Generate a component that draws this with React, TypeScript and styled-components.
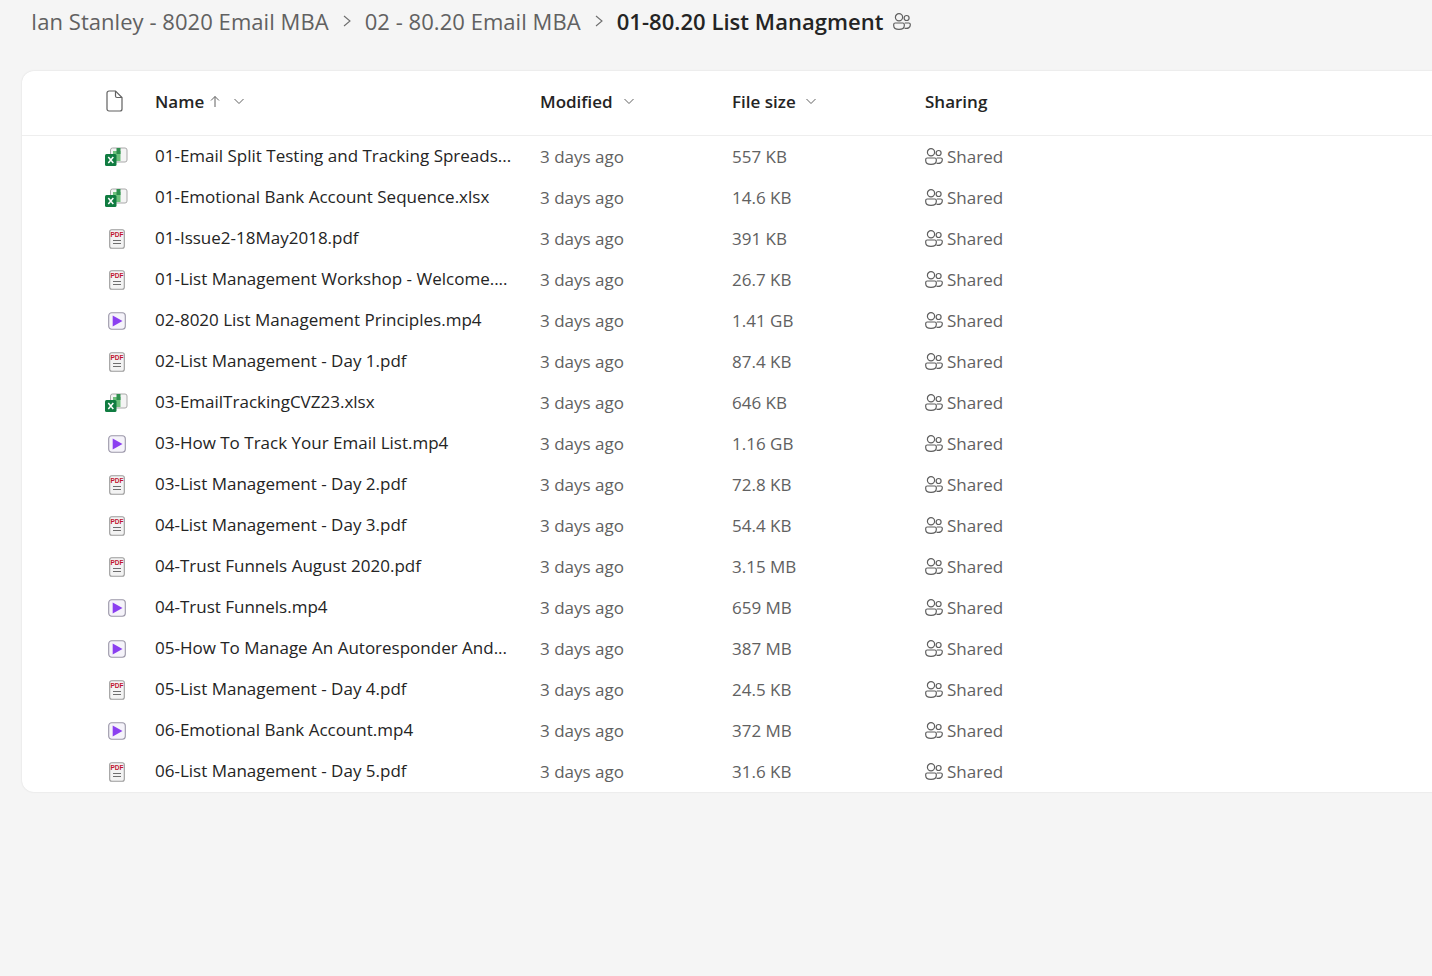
import React from "react";
import styled, { createGlobalStyle } from "styled-components";

type FileKind = "excel" | "pdf" | "video";

interface FileRow {
  name: string;
  kind: FileKind;
  size: string;
}

const files: FileRow[] = [
  { name: "01-Email Split Testing and Tracking Spreads...", kind: "excel", size: "557 KB" },
  { name: "01-Emotional Bank Account Sequence.xlsx", kind: "excel", size: "14.6 KB" },
  { name: "01-Issue2-18May2018.pdf", kind: "pdf", size: "391 KB" },
  { name: "01-List Management Workshop - Welcome....", kind: "pdf", size: "26.7 KB" },
  { name: "02-8020 List Management Principles.mp4", kind: "video", size: "1.41 GB" },
  { name: "02-List Management - Day 1.pdf", kind: "pdf", size: "87.4 KB" },
  { name: "03-EmailTrackingCVZ23.xlsx", kind: "excel", size: "646 KB" },
  { name: "03-How To Track Your Email List.mp4", kind: "video", size: "1.16 GB" },
  { name: "03-List Management - Day 2.pdf", kind: "pdf", size: "72.8 KB" },
  { name: "04-List Management - Day 3.pdf", kind: "pdf", size: "54.4 KB" },
  { name: "04-Trust Funnels August 2020.pdf", kind: "pdf", size: "3.15 MB" },
  { name: "04-Trust Funnels.mp4", kind: "video", size: "659 MB" },
  { name: "05-How To Manage An Autoresponder And...", kind: "video", size: "387 MB" },
  { name: "05-List Management - Day 4.pdf", kind: "pdf", size: "24.5 KB" },
  { name: "06-Emotional Bank Account.mp4", kind: "video", size: "372 MB" },
  { name: "06-List Management - Day 5.pdf", kind: "pdf", size: "31.6 KB" },
];

const SharedIcon = () => (
  <svg width="18" height="17" viewBox="0 0 18 17" fill="none" stroke="#5f5f5f" strokeWidth="1.200">
    <circle cx="6" cy="4.300" r="3.600" />
    <circle cx="13.600" cy="5" r="2.500" />
    <path d="M.7 11.500c0-.9.7-1.500 1.500-1.500h7.600c.9 0 1.500.6 1.500 1.500v.9c0 2.300-2.200 3.900-5.300 3.900S.7 14.700.7 12.400z" />
    <path d="M11.500 15.200c3.300.7 5.800-.6 5.800-3.100v-.6c0-.9-.7-1.500-1.500-1.500h-4" />
  </svg>
);

const Chevron = () => (
  <svg width="12" height="12" viewBox="0 0 12 12" fill="none" stroke="#616161" strokeWidth="1">
    <path d="M1.500 4l4.500 4.500L10.500 4" />
  </svg>
);

const BreadcrumbChevron = () => (
  <svg width="10" height="14" viewBox="0 0 10 14" fill="none" stroke="#6e6e6e" strokeWidth="1.100">
    <path d="M2 2l6 5-6 5" />
  </svg>
);

const UpArrow = () => (
  <svg width="12" height="13" viewBox="0 0 12 13" fill="none" stroke="#616161" strokeWidth="1">
    <path d="M6 12V1.500M2 5.500l4-4 4 4" />
  </svg>
);

const BlankFileIcon = () => (
  <svg width="17" height="22" viewBox="0 0 17 22" fill="none" stroke="#616161" strokeWidth="1.200">
    <path d="M3 1h6.500L16 7.500V19a2 2 0 0 1-2 2H3a2 2 0 0 1-2-2V3a2 2 0 0 1 2-2z" />
    <path d="M9.500 1v5A1.500 1.500 0 0 0 11 7.500h5" />
  </svg>
);

const ExcelIcon = () => (
  <svg width="23" height="19" viewBox="0 0 23 19">
    <rect x="5.500" y="1" width="16.500" height="14" rx="2" fill="#f4f4f4" stroke="#a9a9a9" />
    <path d="M8 4h7.500v10H8z" fill="#6fc07c" />
    <path d="M11.500 1h4v6h-4z" fill="#2f8f4e" />
    <rect x="0" y="7" width="11.500" height="12" rx="1.500" fill="#107c41" />
    <path d="M3.300 10l5 6M8.300 10l-5 6" stroke="#fff" strokeWidth="1.500" />
  </svg>
);

const PdfIcon = () => (
  <svg width="16" height="20" viewBox="0 0 16 20">
    <rect x="0.700" y="0.700" width="14.600" height="18.600" rx="2" fill="#f3f3f3" stroke="#9a9a9a" strokeWidth="1.100" />
    <PdfLabel x="8" y="8" textAnchor="middle">PDF</PdfLabel>
    <path d="M4 11.500h8M4 14.500h8" stroke="#6e6e6e" strokeWidth="1.100" />
  </svg>
);

const VideoIcon = () => (
  <svg width="18" height="18" viewBox="0 0 18 18">
    <rect x="0.700" y="0.700" width="16.600" height="16.600" rx="3" fill="#f5f3fa" stroke="#9a96a8" strokeWidth="1.100" />
    <path d="M4.700 3.500l9.800 5.500-9.800 5.500z" fill="#8b3ff0" />
  </svg>
);

const kindIcons: Record<FileKind, React.ReactNode> = {
  excel: <ExcelIcon />,
  pdf: <PdfIcon />,
  video: <VideoIcon />,
};

const App: React.FC = () => (
  <>
    <GlobalStyle />
    <Page>
      <Breadcrumbs>
        <Crumb>Ian Stanley - 8020 Email MBA</Crumb>
        <BreadcrumbChevron />
        <Crumb>02 - 80.20 Email MBA</Crumb>
        <BreadcrumbChevron />
        <CurrentCrumb>01-80.20 List Managment</CurrentCrumb>
        <CrumbShared>
          <SharedIcon />
        </CrumbShared>
      </Breadcrumbs>
      <Card>
        <HeaderRow>
          <HeaderIconCell>
            <BlankFileIcon />
          </HeaderIconCell>
          <HeaderCell>
            Name <UpArrow />
            <ChevronGap $extra={2}>
              <Chevron />
            </ChevronGap>
          </HeaderCell>
          <HeaderCell>
            Modified
            <ChevronGap>
              <Chevron />
            </ChevronGap>
          </HeaderCell>
          <HeaderCell>
            File size
            <ChevronGap $extra={-1}>
              <Chevron />
            </ChevronGap>
          </HeaderCell>
          <HeaderCell>Sharing</HeaderCell>
        </HeaderRow>
        {files.map((file) => (
          <Row key={file.name}>
            <IconCell>{kindIcons[file.kind]}</IconCell>
            <NameCell>{file.name}</NameCell>
            <MetaCell>3 days ago</MetaCell>
            <MetaCell>{file.size}</MetaCell>
            <SharedCell>
              <SharedIcon />
              Shared
            </SharedCell>
          </Row>
        ))}
      </Card>
    </Page>
  </>
);

export default App;

const GlobalStyle = createGlobalStyle`
  html, body {
    margin: 0;
    height: 100%;
    background: #f5f5f5;
    overflow: hidden;
  }
  body {
    font-family: "Open Sans", "Noto Sans", "Liberation Sans", sans-serif;
  }
`;

const Page = styled.div`
  width: 1432px;
  height: 976px;
  overflow: hidden;
  background: #f5f5f5;
`;

const Breadcrumbs = styled.div`
  display: flex;
  align-items: center;
  gap: 13px;
  height: 42px;
  padding-left: 31px;
  margin-bottom: 29px;
`;

const Crumb = styled.span`
  font-size: 22px;
  letter-spacing: 0.05px;
  color: #616161;
  white-space: nowrap;
`;

const CurrentCrumb = styled(Crumb)`
  color: #242424;
  font-weight: 600;
`;

const CrumbShared = styled.span`
  display: inline-flex;
  margin-left: -4px;
`;

const Card = styled.div`
  width: 1450px;
  margin-left: 22px;
  background: #fff;
  border-radius: 12px;
  box-shadow: 0 0 2px rgba(0, 0, 0, 0.12);
`;

const HeaderRow = styled.div`
  display: grid;
  grid-template-columns: 133px 385px 192px 193px 1fr;
  align-items: center;
  height: 60px;
  padding-bottom: 4px;
  border-bottom: 1px solid #eee;
`;

const Row = styled.div`
  display: grid;
  grid-template-columns: 133px 385px 192px 193px 1fr;
  align-items: center;
  height: 41px;
`;

const IconCell = styled.div`
  display: flex;
  justify-content: center;
  align-items: center;
  padding-left: 54px;
  width: 81px;
`;

const HeaderIconCell = styled(IconCell)`
  padding-right: 5px;
  width: 76px;
`;

const HeaderCell = styled.div`
  display: flex;
  align-items: center;
  gap: 5px;
  font-size: 17px;
  font-weight: 600;
  color: #242424;
  white-space: nowrap;
`;

const ChevronGap = styled.span<{ $extra?: number }>`
  display: inline-flex;
  margin-left: ${({ $extra = 0 }) => 5 + $extra}px;
`;

const PdfLabel = styled.text`
  font-family: "Liberation Sans", sans-serif;
  font-size: 6.5px;
  font-weight: 700;
  fill: #c0142f;
`;

const NameCell = styled.div`
  font-size: 17px;
  color: #242424;
  white-space: nowrap;
  margin-top: -2px;
`;

const MetaCell = styled.div`
  font-size: 17px;
  color: #616161;
  white-space: nowrap;
`;

const SharedCell = styled(MetaCell)`
  display: flex;
  align-items: center;
  gap: 4px;
`;
